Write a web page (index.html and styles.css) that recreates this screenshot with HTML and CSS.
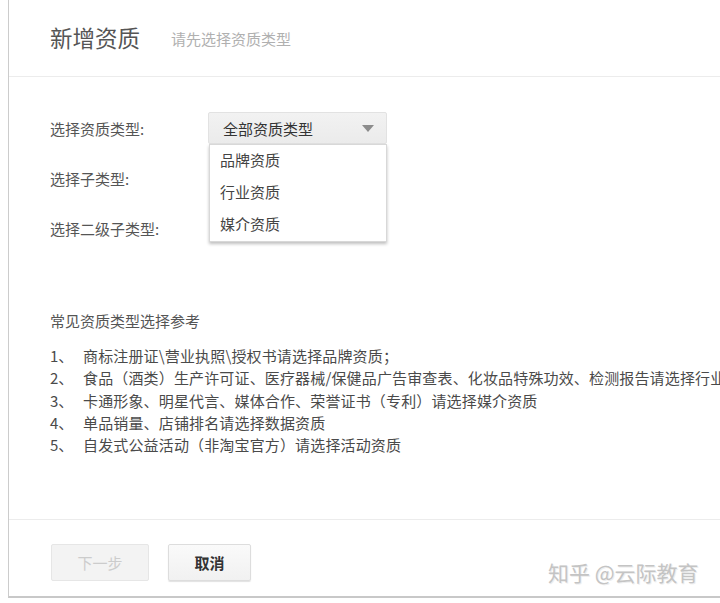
FILE: index.html
```html
<!DOCTYPE html>
<html lang="zh-CN">
<head>
    <meta charset="UTF-8">
    <title>新增资质</title>
    <link rel="stylesheet" href="styles.css">
</head>
<body>
    <div class="panel">
        <div class="panel-header">
            <h1 class="title">新增资质</h1>
            <span class="subtitle">请先选择资质类型</span>
        </div>

        <div class="panel-body">
            <div class="form">
                <div class="form-row">
                    <span class="form-label">选择资质类型:</span>
                    <div class="select-wrap">
                        <div class="select">
                            <span>全部资质类型</span>
                            <span class="caret"></span>
                        </div>
                        <ul class="dropdown">
                            <li>品牌资质</li>
                            <li>行业资质</li>
                            <li>媒介资质</li>
                        </ul>
                    </div>
                </div>
                <div class="form-row">
                    <span class="form-label">选择子类型:</span>
                </div>
                <div class="form-row">
                    <span class="form-label">选择二级子类型:</span>
                </div>
            </div>

            <div class="ref">
                <p class="ref-title">常见资质类型选择参考</p>
                <ol class="ref-list">
                    <li><span class="num">1、</span>商标注册证\营业执照\授权书请选择品牌资质；</li>
                    <li><span class="num">2、</span>食品（酒类）生产许可证、医疗器械/保健品广告审查表、化妆品特殊功效、检测报告请选择行业资质</li>
                    <li><span class="num">3、</span>卡通形象、明星代言、媒体合作、荣誉证书（专利）请选择媒介资质</li>
                    <li><span class="num">4、</span>单品销量、店铺排名请选择数据资质</li>
                    <li><span class="num">5、</span>自发式公益活动（非淘宝官方）请选择活动资质</li>
                </ol>
            </div>
        </div>

        <div class="panel-footer">
            <button class="btn btn-disabled" disabled>下一步</button>
            <button class="btn btn-cancel">取消</button>
            <span class="watermark">知乎 @云际教育</span>
        </div>
    </div>
</body>
</html>
```

FILE: styles.css
```css
html, body {
    margin: 0;
    padding: 0;
    background-color: #ffffff;
    overflow: hidden;
}
body {
    font-family: "Noto Sans CJK SC", "Noto Sans", sans-serif;
    font-size: 15px;
    color: #555555;
}
.panel {
    position: relative;
    margin-left: 8px;
    width: 712px;
    height: 596px;
    border-left: 1px solid #cccccc;
    border-bottom: 2px solid #c8c8c8;
    display: flex;
    flex-direction: column;
    overflow: hidden;
}
.panel-header {
    height: 77px;
    border-bottom: 1px solid #ececec;
    display: flex;
    align-items: center;
    padding-left: 41px;
    box-sizing: border-box;
}
.title {
    margin: 0;
    font-size: 22.5px;
    font-weight: normal;
    color: #555555;
    line-height: 1;
    padding-bottom: 2px;
}
.subtitle {
    margin-left: 31px;
    font-size: 15px;
    color: #b0b0b0;
}
.panel-body {
    flex: 1;
    padding: 35px 0 0 41px;
    border-bottom: 1px solid #ececec;
}
.form {
    display: flex;
    flex-direction: column;
    gap: 18px;
}
.form-row {
    height: 32px;
    display: flex;
    align-items: center;
}
.form-label {
    width: 158px;
    color: #555555;
}
.select-wrap {
    position: relative;
}
.select {
    width: 179px;
    height: 32px;
    box-sizing: border-box;
    padding: 0 12px 0 14px;
    display: flex;
    align-items: center;
    justify-content: space-between;
    background: linear-gradient(#f2f2f2, #ebebeb);
    border: 1px solid #e2e2e2;
    border-radius: 2px;
    color: #333333;
}
.caret {
    width: 0;
    height: 0;
    border-left: 6px solid transparent;
    border-right: 6px solid transparent;
    border-top: 7px solid #8c8c8c;
}
.dropdown {
    position: absolute;
    top: 32px;
    left: 1px;
    width: 178px;
    height: 98px;
    margin: 0;
    padding: 0;
    list-style: none;
    box-sizing: border-box;
    background-color: #ffffff;
    border: 1px solid #d8d8d8;
    box-shadow: 0 2px 3px rgba(0, 0, 0, 0.25);
    z-index: 2;
}
.dropdown li {
    height: 32px;
    line-height: 30px;
    padding-left: 10px;
    color: #444444;
}
.ref {
    margin-top: 67px;
}
.ref-title {
    margin: 0;
    line-height: 20px;
    color: #555555;
}
.ref-list {
    margin: 14px 0 0 0;
    padding: 0;
    list-style: none;
}
.ref-list li {
    line-height: 22.3px;
    white-space: nowrap;
    color: #4a4a4a;
    letter-spacing: 0.15px;
}
.num {
    display: inline-block;
    width: 33px;
    letter-spacing: 0;
}
.panel-footer {
    position: relative;
    height: 76px;
    padding: 24px 0 0 42px;
    box-sizing: border-box;
    display: flex;
    align-items: flex-start;
    gap: 19px;
}
.btn {
    height: 37px;
    font-family: inherit;
    font-size: 15px;
    border-radius: 2px;
    box-sizing: border-box;
}
.btn-disabled {
    width: 98px;
    background-color: #f3f3f3;
    border: 1px solid #e6e6e6;
    color: #cccccc;
}
.btn-cancel {
    width: 83px;
    background: linear-gradient(#fafafa, #f1f1f1);
    border: 1px solid #dddddd;
    box-shadow: 0 1px 1px rgba(0, 0, 0, 0.12);
    color: #333333;
    font-weight: bold;
    cursor: pointer;
}
.watermark {
    position: absolute;
    left: 539px;
    top: 37px;
    font-size: 21px;
    color: #c4c4c4;
    text-shadow: 1px 1px 0 #eeeeee;
    white-space: nowrap;
}
```
